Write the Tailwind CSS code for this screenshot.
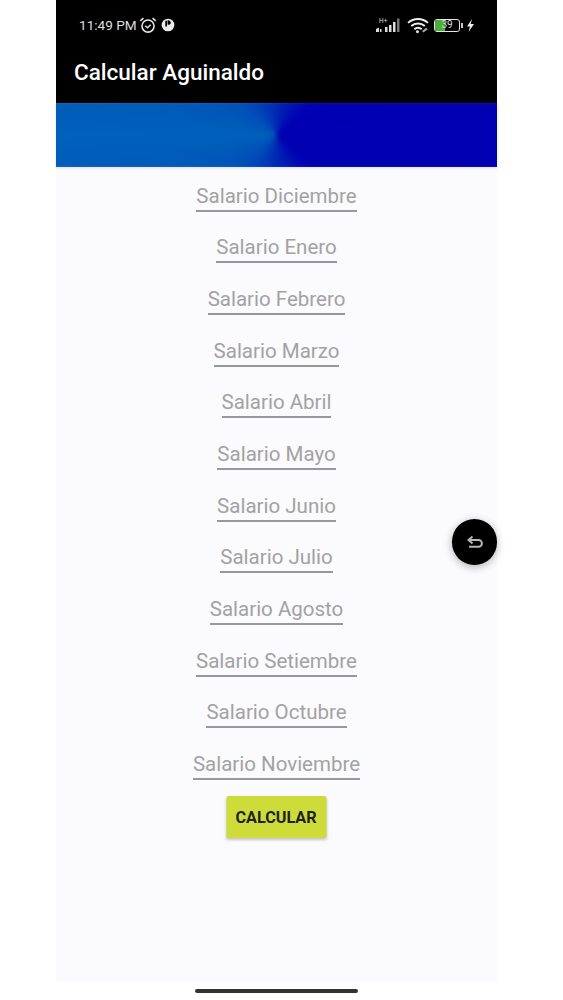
<!DOCTYPE html>
<html>
<head>
<meta charset="utf-8">
<script src="https://cdn.jsdelivr.net/npm/@tailwindcss/browser@4"></script>
</head>
<body class="bg-white font-['Roboto',sans-serif]">
<div class="w-[563px] h-[1000px] overflow-hidden bg-white relative">
  <div class="ml-[56px] w-[441px] h-[982px] bg-[#fbfafc] flex flex-col">
    <header class="bg-black h-[103px] text-white shrink-0 flex flex-col">
      <div class="h-[50px] flex items-center justify-between pl-[23px] pr-[22px]">
        <div class="flex items-center gap-[2px] text-[13.600px] text-[#dedede] pt-[1px]">
          <span>11:49 PM</span>
          <svg width="18" height="18" viewBox="0 0 17 17" fill="none" stroke="#e4e4e4" stroke-width="1.5"><circle cx="8.5" cy="9.5" r="5.7"/><path d="M5.8 9.200l2.200 2 3-3" stroke-width="1.300"/><path d="M1.200 4.600l3-2.600M15.800 4.600l-3-2.600"/></svg>
          <svg class="ml-[2px]" width="14" height="14" viewBox="0 0 15 15"><circle cx="7.5" cy="7.5" r="6.8" fill="#ececec"/><path d="M4.600 3h1.800v6H4.600z" fill="#000"/><path d="M7 2.500a3 3 0 0 1 3.500 3.500a3 3 0 0 1-3.500 1z" fill="#000"/></svg>
        </div>
        <div class="flex items-center">
          <svg width="28" height="18" viewBox="0 0 28 18"><text x="4" y="7" font-size="6.500" fill="#ddd" font-family="Roboto">H+</text><path d="M1 13l3-1.500v4.500H1zM5 13h1.500v3H5z" fill="#ddd"/><path d="M10 11h2.500v5H10zM14 9h2.500v7H14zM18 6h2.500v10H18z" fill="#ddd"/><path d="M22 2.500h2.500V16H22z" fill="#777"/></svg>
          <svg class="ml-[4px]" width="22" height="17" viewBox="0 0 21 16" fill="none" stroke="#eee" stroke-width="1.900"><path d="M1 5.500c5.500-5 13.500-5 19 0"/><path d="M4 8.500c3.800-3.200 9.200-3.200 13 0"/><path d="M7 11.500c2-1.500 5-1.500 7 0"/><circle cx="10" cy="14" r="1.400" fill="#eee" stroke="none"/><path d="M15 14l4-3" stroke="#aaa" stroke-width="2"/></svg>
          <div class="ml-[5px] relative w-[26px] h-[13px] rounded-[3px] border-[1.5px] border-[#e8e8e8] overflow-hidden flex items-center">
            <div class="h-full w-[10px] bg-[#4caf35]"></div>
            <span class="absolute inset-0 text-center text-[10px] leading-[10px] text-[#ddd]">39</span>
          </div>
          <div class="ml-[1px] w-[2px] h-[5px] bg-[#ccc]"></div>
          <svg class="ml-[3px]" width="9" height="13" viewBox="0 0 9 13"><path d="M6 0L1 7.500h3L2.500 13 8 5H4.700z" fill="#eee"/></svg>
        </div>
      </div>
      <h1 class="pl-[18px] text-[22.5px] leading-[44px] font-medium">Calcular Aguinaldo</h1>
    </header>
    <div class="h-[64px] shrink-0 overflow-hidden shadow-[0_1px_3px_rgba(0,0,0,0.12)]">
      <div class="h-full blur-[2px] scale-110 bg-[conic-gradient(at_50%_50%,#0028b4_0deg,#0000b4_50deg,#0000b0_130deg,#0028b4_180deg,#0050b8_230deg,#0060ba_270deg,#0050b8_310deg,#0028b4_360deg)]"></div>
    </div>
    <main class="flex flex-col items-center pt-[14.600px]">
      <div class="h-[30.100px] border-b-2 border-[#98989c] text-[20.500px] leading-[28px] text-[#a2a2a5] mb-[21.570px]">Salario Diciembre</div>
      <div class="h-[30.100px] border-b-2 border-[#98989c] text-[20.500px] leading-[28px] text-[#a2a2a5] mb-[21.570px]">Salario Enero</div>
      <div class="h-[30.100px] border-b-2 border-[#98989c] text-[20.500px] leading-[28px] text-[#a2a2a5] mb-[21.570px]">Salario Febrero</div>
      <div class="h-[30.100px] border-b-2 border-[#98989c] text-[20.500px] leading-[28px] text-[#a2a2a5] mb-[21.570px]">Salario Marzo</div>
      <div class="h-[30.100px] border-b-2 border-[#98989c] text-[20.500px] leading-[28px] text-[#a2a2a5] mb-[21.570px]">Salario Abril</div>
      <div class="h-[30.100px] border-b-2 border-[#98989c] text-[20.500px] leading-[28px] text-[#a2a2a5] mb-[21.570px]">Salario Mayo</div>
      <div class="h-[30.100px] border-b-2 border-[#98989c] text-[20.500px] leading-[28px] text-[#a2a2a5] mb-[21.570px]">Salario Junio</div>
      <div class="h-[30.100px] border-b-2 border-[#98989c] text-[20.500px] leading-[28px] text-[#a2a2a5] mb-[21.570px]">Salario Julio</div>
      <div class="h-[30.100px] border-b-2 border-[#98989c] text-[20.500px] leading-[28px] text-[#a2a2a5] mb-[21.570px]">Salario Agosto</div>
      <div class="h-[30.100px] border-b-2 border-[#98989c] text-[20.500px] leading-[28px] text-[#a2a2a5] mb-[21.570px]">Salario Setiembre</div>
      <div class="h-[30.100px] border-b-2 border-[#98989c] text-[20.500px] leading-[28px] text-[#a2a2a5] mb-[21.570px]">Salario Octubre</div>
      <div class="h-[30.100px] border-b-2 border-[#98989c] text-[20.500px] leading-[28px] text-[#a2a2a5]">Salario Noviembre</div>
      <button class="mt-[16.300px] -translate-x-[0.5px] w-[100px] h-[42px] rounded-[2px] bg-[#cddc39] text-[#1f1f1f] text-[16.200px] font-bold pt-[1px] shadow-[0_2px_3px_rgba(0,0,0,0.22)]">CALCULAR</button>
    </main>
  </div>
  <div class="absolute left-[452px] top-[519px] w-[45px] h-[46px] rounded-full bg-black flex items-center justify-center shadow-[0_2px_8px_rgba(0,0,0,0.3)]">
    <svg width="18" height="16" viewBox="0 0 18 16" fill="none" stroke="#b5b5b5" stroke-width="2"><path d="M6.500 2.500L2.500 6l4 3.500"/><path d="M3 6h9.500a3.300 3.300 0 0 1 0 6.800H3"/></svg>
  </div>
  <div class="absolute left-[195px] top-[989px] w-[163px] h-[4px] rounded-full bg-[#333333]"></div>
</div>
</body>
</html>
